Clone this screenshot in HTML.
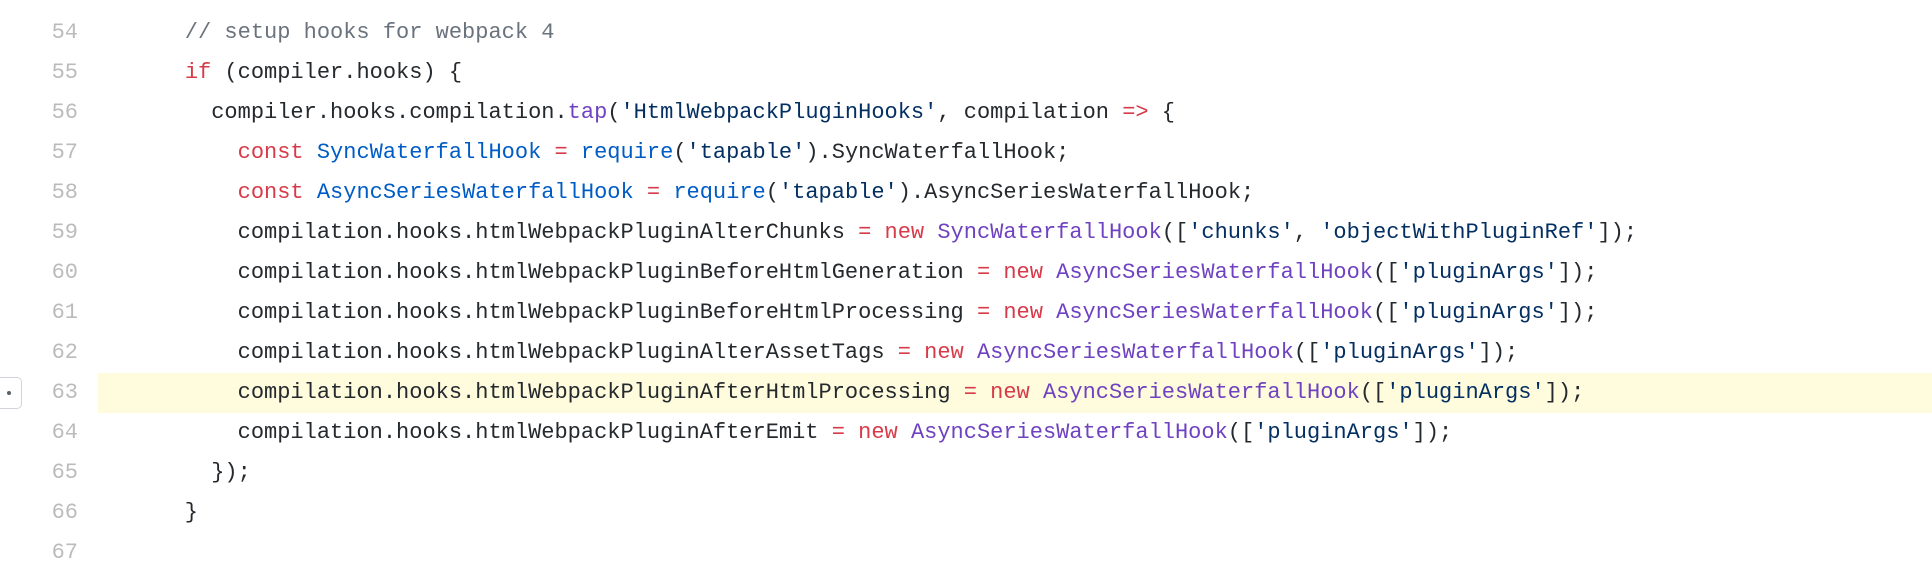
<!DOCTYPE html>
<html><head><meta charset="utf-8"><style>
html,body{margin:0;padding:0;background:#fff;width:1932px;height:566px;overflow:hidden}
.wrap{position:absolute;top:-27px;left:0;width:1932px}
.l{position:relative;height:40px;line-height:40px;font-family:"Liberation Mono","DejaVu Sans Mono",monospace;font-size:22px;color:#24292e;white-space:pre}
.n{position:absolute;left:0;width:78px;text-align:right;color:rgba(27,31,35,.3)}
.c{position:absolute;left:132px}
.hl{position:absolute;left:98px;right:0;top:0;bottom:0;background:#fffbdd}
.k{color:#d73a49}.e{color:#6f42c1}.b{color:#005cc5}.s{color:#032f62}.cm{color:#6a737d}
.btn{position:absolute;left:-8px;top:4px;width:30px;height:32px;border:1px solid #d1d5da;border-radius:5px;box-sizing:border-box;background:#fff}
.btn:after{content:"";position:absolute;right:10px;top:13px;width:4px;height:4px;border-radius:2px;background:#586069}
</style></head><body><div class="wrap">
<div class="l"><span class="n">53</span></div>
<div class="l"><span class="n">54</span><span class="c cm">    // setup hooks for webpack 4</span></div>
<div class="l"><span class="n">55</span><span class="c">    <span class="k">if</span> (compiler.hooks) {</span></div>
<div class="l"><span class="n">56</span><span class="c">      compiler.hooks.compilation.<span class="e">tap</span>(<span class="s">'HtmlWebpackPluginHooks'</span>, compilation <span class="k">=&gt;</span> {</span></div>
<div class="l"><span class="n">57</span><span class="c">        <span class="k">const</span> <span class="b">SyncWaterfallHook</span> <span class="k">=</span> <span class="b">require</span>(<span class="s">'tapable'</span>).SyncWaterfallHook;</span></div>
<div class="l"><span class="n">58</span><span class="c">        <span class="k">const</span> <span class="b">AsyncSeriesWaterfallHook</span> <span class="k">=</span> <span class="b">require</span>(<span class="s">'tapable'</span>).AsyncSeriesWaterfallHook;</span></div>
<div class="l"><span class="n">59</span><span class="c">        compilation.hooks.htmlWebpackPluginAlterChunks <span class="k">=</span> <span class="k">new</span> <span class="e">SyncWaterfallHook</span>([<span class="s">'chunks'</span>, <span class="s">'objectWithPluginRef'</span>]);</span></div>
<div class="l"><span class="n">60</span><span class="c">        compilation.hooks.htmlWebpackPluginBeforeHtmlGeneration <span class="k">=</span> <span class="k">new</span> <span class="e">AsyncSeriesWaterfallHook</span>([<span class="s">'pluginArgs'</span>]);</span></div>
<div class="l"><span class="n">61</span><span class="c">        compilation.hooks.htmlWebpackPluginBeforeHtmlProcessing <span class="k">=</span> <span class="k">new</span> <span class="e">AsyncSeriesWaterfallHook</span>([<span class="s">'pluginArgs'</span>]);</span></div>
<div class="l"><span class="n">62</span><span class="c">        compilation.hooks.htmlWebpackPluginAlterAssetTags <span class="k">=</span> <span class="k">new</span> <span class="e">AsyncSeriesWaterfallHook</span>([<span class="s">'pluginArgs'</span>]);</span></div>
<div class="l"><span class="hl"></span><span class="btn"></span><span class="n">63</span><span class="c">        compilation.hooks.htmlWebpackPluginAfterHtmlProcessing <span class="k">=</span> <span class="k">new</span> <span class="e">AsyncSeriesWaterfallHook</span>([<span class="s">'pluginArgs'</span>]);</span></div>
<div class="l"><span class="n">64</span><span class="c">        compilation.hooks.htmlWebpackPluginAfterEmit <span class="k">=</span> <span class="k">new</span> <span class="e">AsyncSeriesWaterfallHook</span>([<span class="s">'pluginArgs'</span>]);</span></div>
<div class="l"><span class="n">65</span><span class="c">      });</span></div>
<div class="l"><span class="n">66</span><span class="c">    }</span></div>
<div class="l"><span class="n">67</span><span class="c"></span></div>
</div></body></html>
